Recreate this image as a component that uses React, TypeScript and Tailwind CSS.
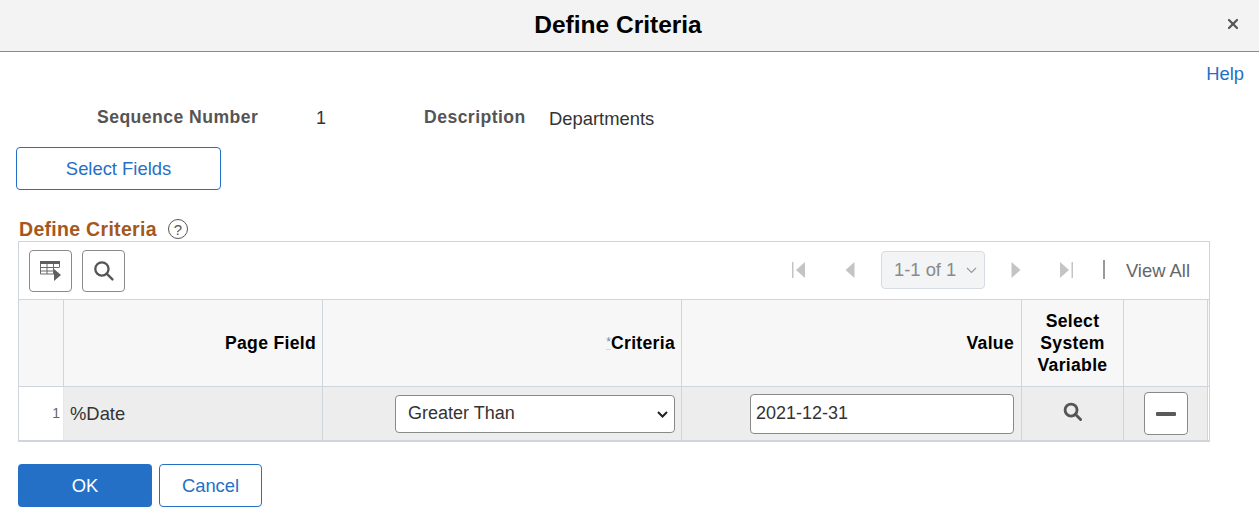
import { X } from "lucide-react";

const font = "font-['Liberation_Sans',Arial,sans-serif]";
const headCell = "flex items-center justify-end border-r border-[#d0d5dc] pr-[6px] text-[17.6px] leading-[22px] font-bold tracking-[0.3px] text-black";
const rowCell = "flex items-center border-r border-[#d0d5dc] bg-[#ededed]";

function SearchIcon({ size, stroke }: { size: number; stroke: number }) {
  return (
    <svg width={size} height={size} viewBox="0 0 20 20" fill="none" stroke="#555" strokeWidth={stroke}>
      <circle cx="8.5" cy="8.5" r="6.3" />
      <path d="M13 13l5.5 5.5" strokeLinecap="round" />
    </svg>
  );
}

function TableIcon() {
  return (
    <svg width="22" height="20" viewBox="0 0 22 20">
      <rect x="0" y="0" width="20" height="3" fill="#5f5f5f" />
      <path d="M.5 3v10h14M.5 6.5h19M.5 10h14M7 3v10M13.500 3v10M19.500 3v3" fill="none" stroke="#6a6a6a" strokeWidth="1" />
      <path d="M14 8l7 6-7 6z" fill="#5f5f5f" />
    </svg>
  );
}

function PagerIcon({ kind }: { kind: "first" | "prev" | "next" | "last" }) {
  return (
    <svg width="16" height="16" viewBox="0 0 16 16" fill="#c4c4c4" className="mb-[2px]">
      {kind === "first" && <path d="M1 0h1.500v16H1zM14 0v16L5 8z" />}
      {kind === "prev" && <path d="M12.500 0v16L3.500 8z" />}
      {kind === "next" && <path d="M3.500 0v16l9-8z" />}
      {kind === "last" && <path d="M13.500 0h1.500v16h-1.500zM2 0v16l9-8z" />}
    </svg>
  );
}

function Chevron({ className, stroke, color }: { className: string; stroke: number; color: string }) {
  return (
    <svg width="11" height="7" viewBox="0 0 11 7" fill="none" stroke={color} strokeWidth={stroke} className={`pointer-events-none absolute ${className}`}>
      <path d="M1 1l4.500 4.500L10 1" />
    </svg>
  );
}

export default function App() {
  return (
    <div className={`${font} h-[514px] w-[1259px] overflow-hidden bg-white text-[18.4px] text-[#333]`}>
      <header className="relative flex h-[52px] items-center justify-center border-b border-[#8a8a8a] bg-[#f3f3f3] pb-[1px] pr-[23px]">
        <h1 className="text-[24.5px] font-bold text-black">Define Criteria</h1>
        <X className="absolute right-[18px] top-[16px] text-[#555]" size={16} strokeWidth={3.2} />
      </header>

      <div className="flex h-[42px] items-center justify-end pr-[15px] pt-[1px]">
        <a className="text-[#2470c7]">Help</a>
      </div>

      <div className="flex h-[53px] items-start pl-[97px] pt-[9px]">
        <span className="mt-[1px] w-[219px] text-[17.6px] font-bold tracking-[0.45px] text-[#555]">Sequence Number</span>
        <span className="mt-[2px] w-[108px] text-[18px]">1</span>
        <span className="mt-[1px] w-[125px] text-[17.6px] font-bold tracking-[0.45px] text-[#555]">Description</span>
        <span className="mt-[2px]">Departments</span>
      </div>

      <button className="ml-[16px] block h-[43px] w-[205px] rounded-[4px] border border-[#2470c7] bg-white text-[#2470c7]">
        Select Fields
      </button>

      <div className="ml-[19px] mt-[27px] flex h-[24px] items-center">
        <h2 className="pt-[1px] text-[19.5px] font-bold tracking-[0.3px] text-[#a5581c]">Define Criteria</h2>
        <span className="ml-[11px] flex h-[20px] w-[20px] items-center justify-center rounded-full border-[1.5px] border-[#555] text-[15px] leading-none text-[#555]">?</span>
      </div>

      <section className="ml-[18px] w-[1192px] border border-b-2 border-[#d0d5dc] border-b-[#d0d5dc]">
        <div className="flex h-[57px] items-center pl-[10px] pr-[19px]">
          <button className="flex h-[42px] w-[43px] items-center justify-center rounded-[4px] border border-[#8a8a8a] bg-white"><TableIcon /></button>
          <button className="ml-[10px] flex h-[42px] w-[43px] items-center justify-center rounded-[4px] border border-[#8a8a8a] bg-white"><SearchIcon size={21} stroke={2.2} /></button>
          <div className="ml-auto flex items-center">
            <PagerIcon kind="first" />
            <span className="ml-[35px]"><PagerIcon kind="prev" /></span>
            <div className="relative mb-[2px] ml-[23px] h-[38px] w-[104px]">
              <select disabled className="h-full w-full appearance-none rounded-[4px] border border-[#d7dce2] bg-[#f2f4f6] pl-[12px] text-[18.4px] text-[#8a8a8a] opacity-100">
                <option>1-1 of 1</option>
              </select>
              <Chevron className="right-[8px] top-[16px]" stroke={1.2} color="#999" />
            </div>
            <span className="ml-[23px]"><PagerIcon kind="next" /></span>
            <span className="ml-[34px]"><PagerIcon kind="last" /></span>
            <span className="mb-[2px] ml-[29px] h-[19px] w-[2px] bg-[#9a9a9a]" />
            <span className="ml-[21px] mt-[1px] text-[#666]">View All</span>
          </div>
        </div>

        <div className="grid h-[88px] grid-cols-[45px_259px_359px_340px_102px_84px] border-y border-[#d0d5dc] bg-[#f7f7f7]">
          <div className="border-r border-[#d0d5dc]" />
          <div className={headCell}>Page Field</div>
          <div className={headCell}>
            <span className="mb-[2px] border-b border-[#d8d8d8] text-[12px] font-normal leading-[14px] tracking-normal text-[#6b8cae]">*</span>
            Criteria
          </div>
          <div className={`${headCell} pr-[7px]`}>Value</div>
          <div className="flex items-center justify-center border-r border-[#d0d5dc] text-center text-[17.6px] leading-[22px] font-bold tracking-[0.3px] text-black">
            <div>Select<br />System<br />Variable</div>
          </div>
          <div className="border-r border-[#d0d5dc]" />
        </div>

        <div className="grid h-[53px] grid-cols-[45px_259px_359px_340px_102px_84px]">
          <div className="flex items-center justify-end border-r border-[#e8e8e8] bg-white pr-[3px] text-[14px] text-[#666]">1</div>
          <div className={`${rowCell} pl-[6px] pt-[1px]`}>%Date</div>
          <div className={`${rowCell} justify-end pr-[6px]`}>
            <div className="relative h-[38px] w-[280px]">
              <select className="h-full w-full appearance-none rounded-[4px] border border-[#8a8a8a] bg-white pl-[12px] text-[18px]">
                <option>Greater Than</option>
              </select>
              <Chevron className="right-[7px] top-[16px]" stroke={2} color="#222" />
            </div>
          </div>
          <div className={`${rowCell} justify-end pr-[7px]`}>
            <input readOnly value="2021-12-31" className="h-[40px] w-[264px] rounded-[4px] border border-[#8a8a8a] bg-white px-[5px] text-[18px]" />
          </div>
          <div className={`${rowCell} justify-center pb-[4px]`}><SearchIcon size={19} stroke={3} /></div>
          <div className={`${rowCell} justify-center`}>
            <button className="flex h-[43px] w-[44px] items-center justify-center rounded-[4px] border border-[#8a8a8a] bg-white">
              <span className="h-[4px] w-[20px] rounded-[1px] bg-[#5a5a5a]" />
            </button>
          </div>
        </div>
      </section>

      <div className="ml-[18px] mt-[22px] flex gap-[7px]">
        <button className="h-[43px] w-[134px] rounded-[4px] bg-[#2470c7] text-white">OK</button>
        <button className="h-[43px] w-[103px] rounded-[4px] border border-[#2470c7] bg-white text-[#2470c7]">Cancel</button>
      </div>
    </div>
  );
}
